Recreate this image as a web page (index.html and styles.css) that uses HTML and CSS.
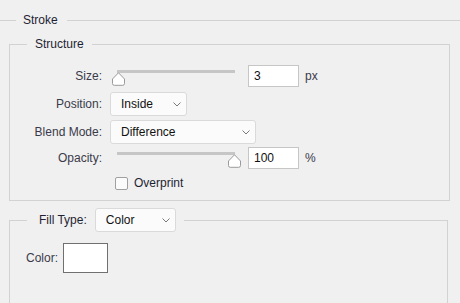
FILE: index.html
```html
<!DOCTYPE html>
<html lang="en">
<head>
  <meta charset="UTF-8" />
  <title>Layer Style - Stroke</title>
  <link rel="stylesheet" href="styles.css">
</head>
<body>
  <div class="section-title">
    <span class="rule lead"></span>
    <span class="title-text">Stroke</span>
    <span class="rule"></span>
  </div>

  <fieldset class="group structure">
    <legend class="group-title">Structure</legend>
    <div class="rows">
      <div class="row tall">
        <label class="lbl">Size:</label>
        <div class="ctrl">
          <div class="slider">
            <div class="track"></div>
            <svg class="thumb" style="margin-left: 0px" width="15" height="14" viewBox="0 0 15 14">
              <path d="M7.5 0.8 L13.5 7 V11.5 Q13.5 13.3 11.7 13.3 H3.3 Q1.5 13.3 1.5 11.5 V7 Z" fill="#fff" stroke="#9a9a9a" stroke-width="1"/>
            </svg>
          </div>
          <input class="num" type="text" value="3">
          <span class="unit">px</span>
        </div>
      </div>

      <div class="row tall">
        <label class="lbl">Position:</label>
        <div class="ctrl">
          <div class="select pos-select">
            <span>Inside</span>
            <svg class="chev" width="8" height="5" viewBox="0 0 8 5"><polyline points="0.5,0.5 4,4 7.5,0.5" fill="none" stroke="#7a7a7a" stroke-width="1"/></svg>
          </div>
        </div>
      </div>

      <div class="row tall">
        <label class="lbl">Blend Mode:</label>
        <div class="ctrl">
          <div class="select blend-select">
            <span>Difference</span>
            <svg class="chev" width="8" height="5" viewBox="0 0 8 5"><polyline points="0.5,0.5 4,4 7.5,0.5" fill="none" stroke="#7a7a7a" stroke-width="1"/></svg>
          </div>
        </div>
      </div>

      <div class="row mid">
        <label class="lbl">Opacity:</label>
        <div class="ctrl">
          <div class="slider">
            <div class="track"></div>
            <svg class="thumb" style="margin-left: 116px" width="15" height="14" viewBox="0 0 15 14">
              <path d="M7.5 0.8 L13.5 7 V11.5 Q13.5 13.3 11.7 13.3 H3.3 Q1.5 13.3 1.5 11.5 V7 Z" fill="#fff" stroke="#9a9a9a" stroke-width="1"/>
            </svg>
          </div>
          <input class="num" type="text" value="100">
          <span class="unit">%</span>
        </div>
      </div>

      <div class="row check-row">
        <span class="lbl"></span>
        <div class="ctrl">
          <span class="checkbox"></span>
          <span class="check-text">Overprint</span>
        </div>
      </div>
    </div>
  </fieldset>

  <fieldset class="group fill">
    <legend class="fill-title">
      <span class="fill-label">Fill Type:</span>
      <div class="select fill-select">
        <span>Color</span>
        <svg class="chev" width="8" height="5" viewBox="0 0 8 5"><polyline points="0.5,0.5 4,4 7.5,0.5" fill="none" stroke="#7a7a7a" stroke-width="1"/></svg>
      </div>
    </legend>
    <div class="color-row">
      <span class="color-label">Color:</span>
      <span class="swatch"></span>
    </div>
  </fieldset>
</body>
</html>
```

FILE: styles.css
```css
body {
  margin: 0;
  background-color: #f0f0f0;
  font-family: "Liberation Sans", Arial, sans-serif;
  font-size: 12px;
  color: #333;
  overflow: hidden;
}
.section-title {
  display: flex;
  align-items: center;
  height: 14px;
  margin-top: 13px;
}
.rule {
  flex: 1;
  height: 1px;
  background-color: #d2d2d2;
}
.rule.lead {
  flex: 0 0 16px;
}
.title-text {
  line-height: 14px;
  padding: 0 9px 0 7px;
  color: #1f1f33;
}
.group {
  border: 1px solid #d2d2d2;
  padding: 0;
  min-width: 0;
}
.structure {
  margin: 10px 10px 0 9px;
}
.group-title {
  margin-left: 17px;
  padding: 0 8px;
  line-height: 14px;
  color: #1f1f33;
}
.rows {
  padding: 11px 0 4px 0;
}
.row {
  display: grid;
  grid-template-columns: 92px auto;
  column-gap: 8px;
  align-items: center;
}
.row.tall {
  height: 28px;
}
.row.mid {
  height: 24px;
}
.check-row {
  height: 26px;
}
.lbl {
  text-align: right;
  color: #3a3a4a;
}
.ctrl {
  display: flex;
  align-items: center;
}
.slider {
  display: flex;
  flex-direction: column;
  width: 131px;
  height: 22px;
  margin-left: 1px;
}
.track {
  height: 3px;
  margin: 5px 7px 0 6px;
  background-color: #c6c6c6;
}
.thumb {
  display: block;
  margin-top: -1px;
}
.num {
  box-sizing: border-box;
  width: 51px;
  height: 22px;
  margin: 0 0 0 6px;
  padding: 0 5px;
  border: 1px solid #c6c6c6;
  background-color: #fff;
  font-family: inherit;
  font-size: 12px;
  color: #111;
  outline: none;
}
.unit {
  margin-left: 6px;
  color: #3a3a4a;
}
.select {
  box-sizing: border-box;
  display: flex;
  align-items: center;
  justify-content: space-between;
  height: 24px;
  padding: 0 5px 0 10px;
  border: 1px solid #dadada;
  border-radius: 3px;
  background-color: #fbfbfb;
  color: #111;
}
.pos-select {
  width: 77px;
}
.blend-select {
  width: 146px;
}
.chev {
  display: block;
}
.checkbox {
  box-sizing: border-box;
  width: 13px;
  height: 13px;
  margin-left: 5px;
  border: 1px solid #a0a0a0;
  border-radius: 2px;
  background-color: #fbfbfb;
}
.check-text {
  margin-left: 6px;
  color: #1f1f33;
}
.fill {
  margin: 7px 12px 0 9px;
  padding: 11px 0 80px 16px;
}
.fill-title {
  display: flex;
  align-items: center;
  margin-left: 1px;
  padding: 0 8px 0 12px;
}
.fill-label {
  margin-right: 8px;
  color: #1f1f33;
}
.fill-select {
  width: 81px;
}
.color-row {
  display: flex;
  align-items: center;
  height: 30px;
}
.color-label {
  color: #3a3a4a;
}
.swatch {
  box-sizing: border-box;
  width: 45px;
  height: 30px;
  margin-left: 5px;
  border: 1px solid #707070;
  background-color: #fff;
}
```
